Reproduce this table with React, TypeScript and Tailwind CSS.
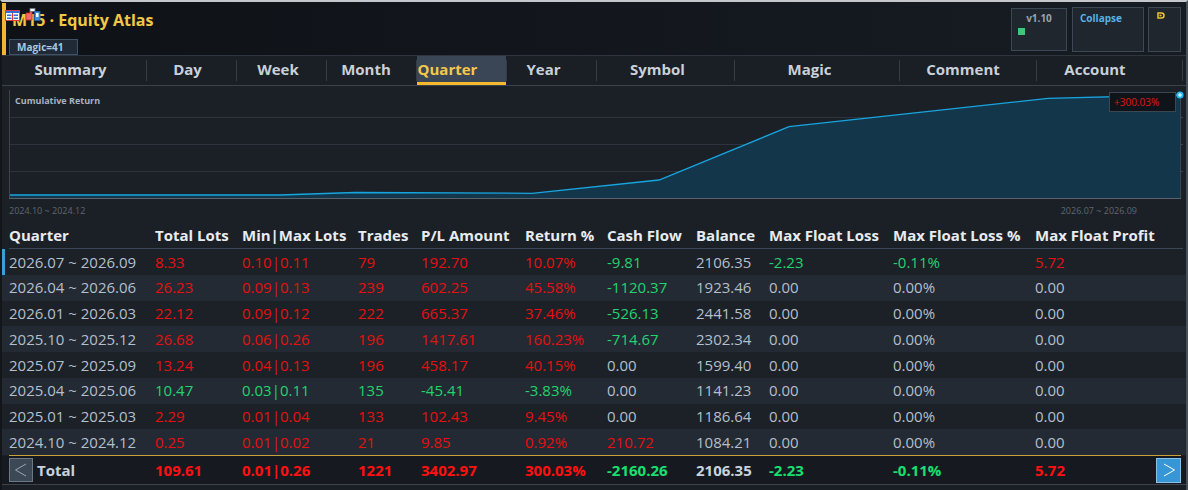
import React from "react";

type C = "r" | "g" | "n";
const col: Record<C, string> = {
  r: "text-[#e5100f]",
  g: "text-[#22d36e]",
  n: "text-[#b4bfcc]",
};
const colB: Record<C, string> = {
  r: "text-[#ff1010]",
  g: "text-[#18e070]",
  n: "text-[#c9d2dc]",
};

const headers = [
  "Quarter",
  "Total Lots",
  "Min|Max Lots",
  "Trades",
  "P/L Amount",
  "Return %",
  "Cash Flow",
  "Balance",
  "Max Float Loss",
  "Max Float Loss %",
  "Max Float Profit",
];

const Z: [string, C][] = [
  ["0.00", "n"],
  ["0.00%", "n"],
  ["0.00", "n"],
];

const rows: [string, C][][] = [
  [["2026.07 ~ 2026.09", "n"], ["8.33", "r"], ["0.10|0.11", "r"], ["79", "r"], ["192.70", "r"], ["10.07%", "r"], ["-9.81", "g"], ["2106.35", "n"], ["-2.23", "g"], ["-0.11%", "g"], ["5.72", "r"]],
  [["2026.04 ~ 2026.06", "n"], ["26.23", "r"], ["0.09|0.13", "r"], ["239", "r"], ["602.25", "r"], ["45.58%", "r"], ["-1120.37", "g"], ["1923.46", "n"], ...Z],
  [["2026.01 ~ 2026.03", "n"], ["22.12", "r"], ["0.09|0.12", "r"], ["222", "r"], ["665.37", "r"], ["37.46%", "r"], ["-526.13", "g"], ["2441.58", "n"], ...Z],
  [["2025.10 ~ 2025.12", "n"], ["26.68", "r"], ["0.06|0.26", "r"], ["196", "r"], ["1417.61", "r"], ["160.23%", "r"], ["-714.67", "g"], ["2302.34", "n"], ...Z],
  [["2025.07 ~ 2025.09", "n"], ["13.24", "r"], ["0.04|0.13", "r"], ["196", "r"], ["458.17", "r"], ["40.15%", "r"], ["0.00", "n"], ["1599.40", "n"], ...Z],
  [["2025.04 ~ 2025.06", "n"], ["10.47", "g"], ["0.03|0.11", "g"], ["135", "g"], ["-45.41", "g"], ["-3.83%", "g"], ["0.00", "n"], ["1141.23", "n"], ...Z],
  [["2025.01 ~ 2025.03", "n"], ["2.29", "r"], ["0.01|0.04", "r"], ["133", "r"], ["102.43", "r"], ["9.45%", "r"], ["0.00", "n"], ["1186.64", "n"], ...Z],
  [["2024.10 ~ 2024.12", "n"], ["0.25", "r"], ["0.01|0.02", "r"], ["21", "r"], ["9.85", "r"], ["0.92%", "r"], ["210.72", "r"], ["1084.21", "n"], ...Z],
];

const total: [string, C][] = [
  ["109.61", "r"],
  ["0.01|0.26", "r"],
  ["1221", "r"],
  ["3402.97", "r"],
  ["300.03%", "r"],
  ["-2160.26", "g"],
  ["2106.35", "n"],
  ["-2.23", "g"],
  ["-0.11%", "g"],
];

const GRID =
  "grid grid-cols-[146px_87px_116px_63px_104px_82px_89px_73px_124px_142px_1fr] items-center";

const tabs: { label: string; w: string; pr: string; active?: boolean }[] = [
  { label: "Summary", w: "w-[145px]", pr: "pr-[7px]" },
  { label: "Day", w: "w-[90px]", pr: "pr-[8px]" },
  { label: "Week", w: "w-[90px]", pr: "pr-[7px]" },
  { label: "Month", w: "w-[90px]", pr: "pr-[11px]" },
  { label: "Quarter", w: "w-[90px]", pr: "pr-[28px]", active: true },
  { label: "Year", w: "w-[90px]", pr: "pr-[16px]" },
  { label: "Symbol", w: "w-[138px]", pr: "pr-[16px]" },
  { label: "Magic", w: "w-[165px]", pr: "pr-[15px]" },
  { label: "Comment", w: "w-[137px]", pr: "pr-[10px]" },
  { label: "Account", w: "w-[146px]", pr: "pr-[29px]" },
];

const linePts: [number, number][] = [
  [0, 106],
  [271, 106],
  [346, 103.5],
  [523, 104.3],
  [650, 91],
  [780, 37.7],
  [1039, 9.3],
  [1171, 6],
];

function Chart() {
  const line = linePts.map((p) => p.join(",")).join(" ");
  const area = `0,109 ${line} 1171,109`;
  return (
    <div className="relative w-[1172px] h-[110px]">
      <svg width="1172" height="110" className="absolute inset-0 overflow-visible">
        <line x1="0" y1="28.5" x2="1171" y2="28.5" stroke="#2c333c" strokeWidth="1" />
        <line x1="0" y1="55.5" x2="1171" y2="55.5" stroke="#2c333c" strokeWidth="1" />
        <line x1="0" y1="82.5" x2="1171" y2="82.5" stroke="#2c333c" strokeWidth="1" />
        <polygon points={area} fill="#14364a" />
        <polyline points={line} fill="none" stroke="#17a5e0" strokeWidth="1.3" />
        <line x1="0.5" y1="1" x2="0.5" y2="109" stroke="#3d4650" strokeWidth="1" />
        <line x1="1171.5" y1="6" x2="1171.5" y2="109" stroke="#3d4650" strokeWidth="1" />
        <line x1="1171" y1="28.5" x2="1174" y2="28.5" stroke="#3d4650" />
        <line x1="1171" y1="55.5" x2="1174" y2="55.5" stroke="#3d4650" />
        <line x1="1171" y1="82.5" x2="1174" y2="82.5" stroke="#3d4650" />
        <line x1="0" y1="109.5" x2="1172" y2="109.5" stroke="#5a636d" strokeWidth="1" />
        <circle cx="1171" cy="6" r="3.6" fill="#1fb8f2" />
        <line x1="1169" y1="6" x2="1173" y2="6" stroke="#ffffff" strokeWidth="1" />
        <line x1="1171" y1="4" x2="1171" y2="8" stroke="#ffffff" strokeWidth="1" />
      </svg>
      <div className="absolute left-[6px] top-[7px] text-[9px] font-bold text-[#aab2bc] leading-none">
        Cumulative Return
      </div>
      <div className="absolute left-[1100px] top-[3px] w-[67px] h-[20px] bg-[#0f141a] border border-[#3d4752] flex items-center pl-[4px] text-[10px] text-[#e01515] leading-none">
        +300.03%
      </div>
    </div>
  );
}

function ListIcon() {
  return (
    <svg width="15" height="11" viewBox="0 0 15 11">
      <rect x="0.5" y="0.5" width="14" height="10" fill="#ffffff" stroke="#e0393e" />
      <rect x="1" y="1" width="13" height="2" fill="#2f6fd6" />
      <rect x="2" y="4.5" width="4.5" height="1.5" fill="#2f6fd6" />
      <rect x="8.5" y="4.5" width="4.5" height="1.5" fill="#2f6fd6" />
      <rect x="2" y="7.5" width="4.5" height="1.5" fill="#2f6fd6" />
      <rect x="8.5" y="7.5" width="4.5" height="1.5" fill="#2f6fd6" />
      <line x1="7.5" y1="3" x2="7.5" y2="10" stroke="#e0393e" />
    </svg>
  );
}

function ToolIcon() {
  return (
    <svg width="16" height="13" viewBox="0 0 16 13">
      <path d="M1 5 H5 V3 H7 V12 H1 Z" fill="#f06a6a" stroke="#d42c2c" strokeWidth="0.8" />
      <rect x="5" y="0.5" width="5" height="3" fill="#ffffff" stroke="#6a7380" strokeWidth="0.8" />
      <rect x="9.5" y="3.5" width="5.5" height="9" fill="#3a8fe0" stroke="#1f5fb0" strokeWidth="0.8" />
      <rect x="11" y="5" width="2.5" height="4" fill="#ffffff" />
    </svg>
  );
}

function Chevron({ dir, color }: { dir: "l" | "r"; color: string }) {
  return (
    <svg width="14" height="14" viewBox="0 0 14 14">
      <polyline
        points={dir === "l" ? "12,1 1.5,7 12,13" : "2,1 12.5,7 2,13"}
        fill="none"
        stroke={color}
        strokeWidth="1"
      />
    </svg>
  );
}

export default function App() {
  return (
    <div className="w-[1188px] h-[490px] overflow-hidden bg-[#1b2027] border-t-2 border-t-[#c4c8cd] border-l-2 border-l-[#12161b] border-r-2 border-r-[#4a5058] font-['Open_Sans',sans-serif] flex flex-col">
      {/* Header */}
      <div className="relative h-[53px] shrink-0 flex justify-between bg-gradient-to-r from-[#0e1217] to-[#171c23]">
        <div className="flex flex-col">
          <div className="flex h-full">
            <div className="w-[4px] mt-[1px] bg-[#f2b531]" />
            <div className="flex flex-col">
              <div className="pt-[7px] pl-[6px] h-[29px] text-[16px] leading-[22px] font-bold text-[#f2c744]">
                M15 · Equity Atlas
              </div>
              <div className="mt-[8px] ml-[3px] w-[69px] h-[16px] bg-[#1f2a36] border border-[#3d5268] flex items-center pl-[7px] text-[10px] font-bold text-[#a6c8e4] leading-none">
                Magic=41
              </div>
            </div>
          </div>
        </div>
        <div className="absolute left-[3px] top-[6px] flex items-end gap-[5px]">
          <ListIcon />
          <ToolIcon />
        </div>
        <div className="flex items-start pr-[5px] gap-[5px]">
          <div className="mt-[6px] w-[56px] h-[43px] bg-[#1f262e] border border-[#3c4955] flex flex-col">
            <div className="text-center text-[10px] font-bold text-[#9aa3ad] leading-none pt-[4px]">v1.10</div>
            <div className="ml-[6px] mt-[5px] w-[7px] h-[7px] bg-[#3cc878]" />
          </div>
          <div className="mt-[5px] w-[72px] h-[45px] bg-[#1f262e] border border-[#3c4955] pl-[7px] pt-[5px] text-[10px] font-bold text-[#56b1e6] leading-none">
            Collapse
          </div>
          <div className="mt-[5px] -ml-[1px] w-[33px] h-[45px] bg-[#1f262e] border border-[#3c4955] pl-[8px] pt-[4px]">
            <svg width="8" height="7" viewBox="0 0 8 7">
              <path d="M1 1 H4.5 A2.5 2.5 0 0 1 4.5 6 H1 Z" fill="none" stroke="#e8c437" strokeWidth="1.5" />
              <rect x="2.5" y="2.7" width="2" height="1.6" fill="#e8c437" />
            </svg>
          </div>
        </div>
      </div>

      {/* Tabs */}
      <div className="h-[31px] shrink-0 flex bg-[#1a1e25] border-t border-t-[#2e353e] border-b border-b-[#3a424c]">
        {tabs.map((t) => (
          <div key={t.label} className={`${t.w} flex items-center`}>
            <div
              className={`flex-1 h-full flex items-center justify-center ${t.pr} text-[15px] font-bold ${
                t.active
                  ? "bg-[#3a4656] text-[#f4c84a] border-b-[3px] border-b-[#f5b82e]"
                  : "text-[#c9d0d8] pb-[3px]"
              }`}
            >
              {t.label}
            </div>
            <div className="w-px h-[21px] bg-[#353c46]" />
          </div>
        ))}
      </div>

      {/* Chart */}
      <div className="shrink-0 pl-[7px] pt-[3px]">
        <Chart />
        <div className="h-[23px] flex items-center justify-between pr-[49px] text-[9px] text-[#5d6772]">
          <span>2024.10 ~ 2024.12</span>
          <span>2026.07 ~ 2026.09</span>
        </div>
      </div>

      {/* Table */}
      <div className="flex flex-col">
        <div className={`${GRID} ml-[7px] mr-[3px] h-[27px] border-b border-b-[#3a4756] text-[15px] font-bold text-[#e8ecf0] whitespace-nowrap`}>
          {headers.map((h) => (
            <div key={h}>{h}</div>
          ))}
        </div>
        {rows.map((r, i) => (
          <div
            key={i}
            className={`${GRID} h-[25.75px] text-[15px] whitespace-nowrap ${
              i % 2 === 0 ? "bg-[#1c2128]" : "bg-[#232a33]"
            } ${i === 0 ? "border-l-[3px] border-l-[#3b9fd6] pl-[4px]" : "pl-[7px]"}`}
          >
            {r.map(([v, c], j) => (
              <div key={j} className={col[c]}>
                {v}
              </div>
            ))}
          </div>
        ))}
        <div className="ml-[7px] mr-[5px] h-px bg-[#c9a03a]" />
        <div className={`${GRID} h-[28px] bg-[#161a20] pl-[7px] pr-[5px] text-[15px] font-bold whitespace-nowrap`}>
          <div className="flex items-center gap-[4px]">
            <div className="w-[24px] h-[24px] bg-[#3c4855] border border-[#6b7886] flex items-center justify-center">
              <Chevron dir="l" color="#9aa5b1" />
            </div>
            <span className="text-[#c9d2dc]">Total</span>
          </div>
          {total.map(([v, c], j) => (
            <div key={j} className={colB[c]}>
              {v}
            </div>
          ))}
          <div className="flex items-center justify-between">
            <span className={colB.r}>5.72</span>
            <div className="w-[25px] h-[25px] bg-[#3797d6] border border-[#8bc1e6] flex items-center justify-center">
              <Chevron dir="r" color="#ffffff" />
            </div>
          </div>
        </div>
        <div className="h-[6px] border-t border-t-[#3b434c] bg-[#1a1f26]" />
      </div>
    </div>
  );
}
